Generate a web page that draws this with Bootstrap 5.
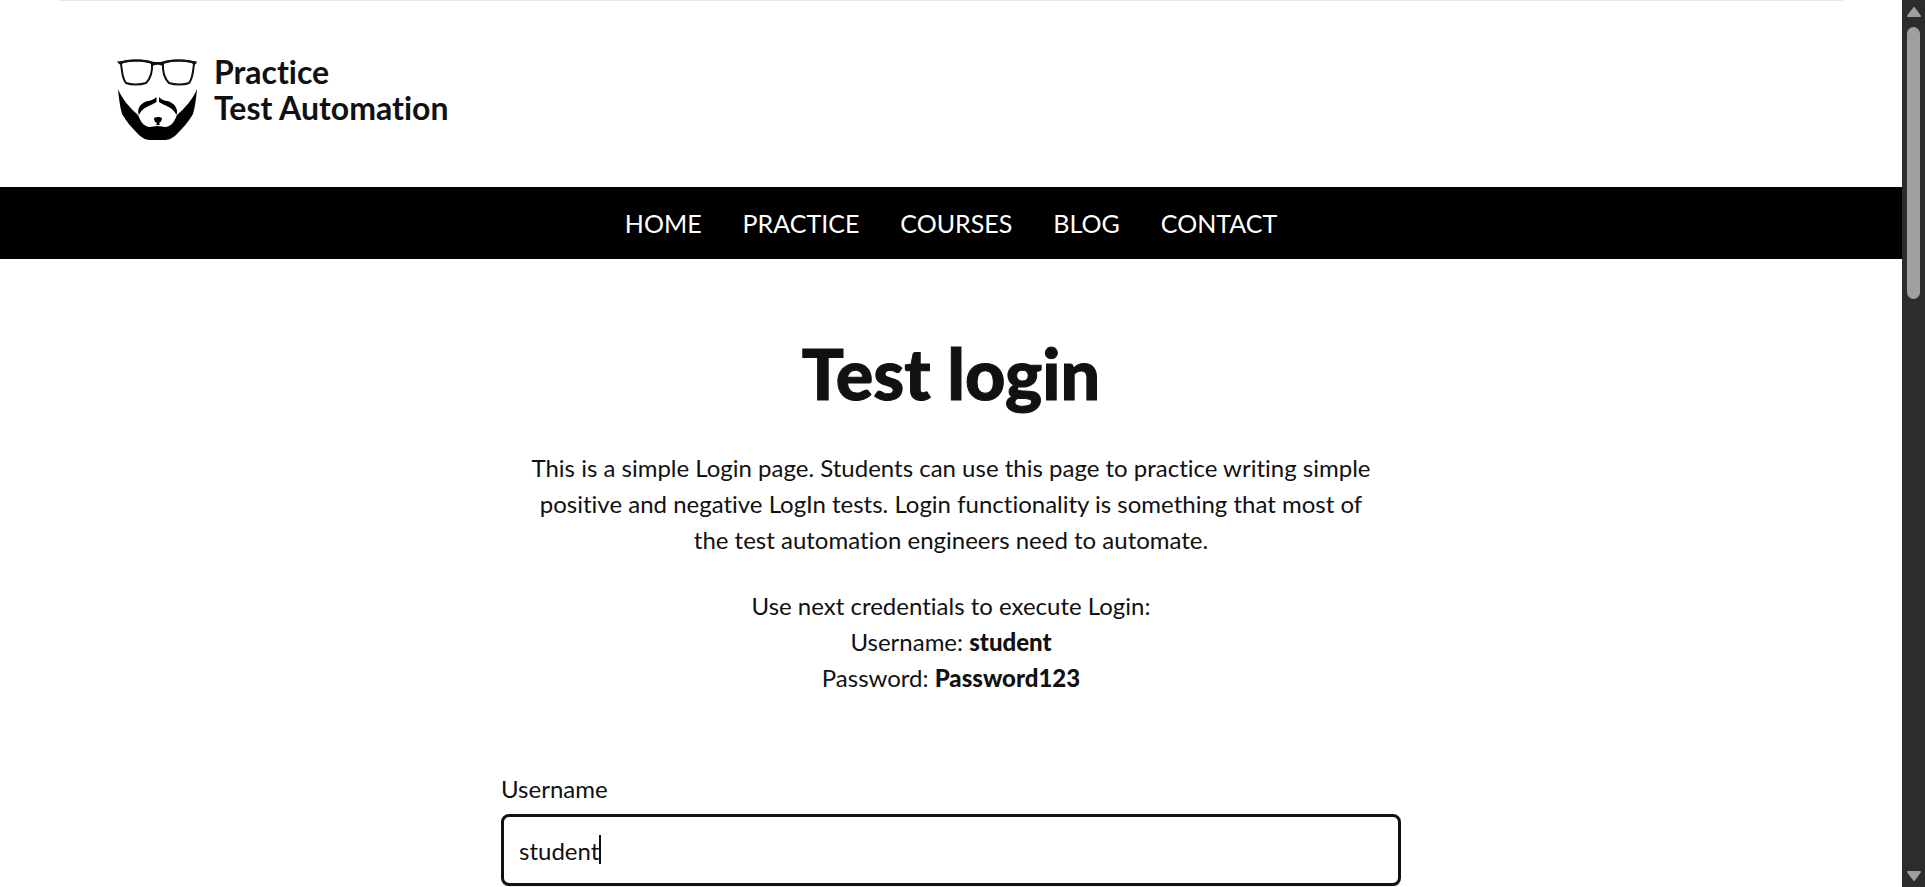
<!DOCTYPE html>
<html lang="en">
<head>
<meta charset="utf-8">
<meta name="viewport" content="width=device-width, initial-scale=1">
<title>Test Login | Practice Test Automation</title>
<link href="https://cdn.jsdelivr.net/npm/bootstrap@5.3.0/dist/css/bootstrap.min.css" rel="stylesheet">
<style>
  body { font-family: Lato, "Liberation Sans", sans-serif; font-size: 24px; line-height: 36px; color: #111; font-variant-ligatures: none; }
  .top-rule { height: 1px; margin: 0 59px; background: #e6e6e6; }
  .site-header { padding: 53px 117px 43px; }
  .brand { gap: 15px; color: #111; font-size: 32px; font-weight: 700; line-height: 36px; }
  .brand-mark { width: 82px; height: 90px; }
  .site-nav { gap: 41px; min-height: 72px; background: #000; }
  .site-nav a { color: #fff; font-size: 25px; }
  .narrow { max-width: 900px; }
  .narrow h1 { font-size: 70px; line-height: 84px; font-weight: 900; margin: 72px 0 35px; -webkit-text-stroke: 1px #111; }
  .intro { padding: 0 12px; }
  .intro p { margin-bottom: 30px; }
  .intro b { font-weight: 900; }
  .login-form { padding-top: 45px; }
  .login-form label { margin-bottom: 7px; }
  .login-form .form-control { height: 72px; padding: 0 15px; border: 3px solid #111; border-radius: 8px; font-size: 24px; color: #111; background: #fff; box-shadow: 0 2px 0 #eee; }
  .caret-line { left: 98px; top: 21px; width: 2px; height: 29px; background: #111; }
  .scroll-track { width: 23px; background: #2c2c2c; padding: 6px 0 2px; gap: 9px; }
  .scroll-thumb { width: 13px; height: 272px; border-radius: 7px; background: #9f9f9f; }
</style>
</head>
<body>
<div class="d-flex vh-100 overflow-hidden">
  <div class="flex-grow-1 overflow-hidden">
    <div class="top-rule"></div>
    <header class="site-header d-flex">
      <a class="brand d-flex text-decoration-none" href="#">
        <svg class="brand-mark" viewBox="0 -2 82 90" aria-hidden="true">
          <g fill="none" stroke="#111" stroke-width="2" stroke-linejoin="round">
            <path d="M3 7C12 3.500 27 3.500 35 7C35.500 14 34 22 29 27C23 29 14 29 9 27C5 23 5 14 4 8"/>
            <path d="M78 7C69 3.500 54 3.500 46 7C45.500 14 47 22 52 27C58 29 67 29 72 27C76 23 76 14 77 8"/>
          </g>
          <path d="M0 5.500L5 5C14 3 28 3 35 5.500Q40.500 6.500 46 5.500C53 3 67 3 76 5L80 5.500L79 8L76.500 9L75 7C66 5 54 5 47 7.500L45.500 10Q40.500 7.500 35.500 10L34 7.500C27 5 15 5 6 7L4.500 9L2 8Z" fill="#111"/>
          <path d="M1 33C5 43 13 52 21 59C23 64 25 68 29 70C33 72 36 70 40.500 70C45 70 48 72 52 70C56 68 58 64 60 59C68 52 76 43 80 33C79 43 78 51 76 58C72 65 66 72 60 78C55 83 51 84 47 84H34C30 84 26 83 21 78C15 72 9 65 5 58C3 51 2 43 1 33Z"/>
          <path d="M39.500 41V46C34 50 26 50 22 59C19 52 25 46 31 45C35 44.500 37 43 39.500 41ZM42 41V46C47.500 50 55 50 59.500 59C62 52 56 46 50 45C46 44.500 44 43 42 41Z"/>
          <path d="M37 62Q41 60 45 62C45 65 43 66.500 42 67L43 69H39L40 67C38.500 66.500 37 65 37 62Z"/>
        </svg>
        <span>Practice<br>Test Automation</span>
      </a>
    </header>
    <nav class="site-nav d-flex justify-content-center align-items-center" aria-label="Main">
      <a class="text-decoration-none" href="#">HOME</a>
      <a class="text-decoration-none" href="#">PRACTICE</a>
      <a class="text-decoration-none" href="#">COURSES</a>
      <a class="text-decoration-none" href="#">BLOG</a>
      <a class="text-decoration-none" href="#">CONTACT</a>
    </nav>
    <main class="narrow mx-auto">
      <h1 class="text-center">Test login</h1>
      <div class="intro text-center">
        <p>This is a simple Login page. Students can use this page to practice writing simple<br>positive and negative LogIn tests. Login functionality is something that most of<br>the test automation engineers need to automate.</p>
        <p>Use next credentials to execute Login:<br>Username: <b>student</b><br>Password: <b>Password123</b></p>
      </div>
      <form class="login-form">
        <label class="d-block" for="username">Username</label>
        <div class="position-relative">
          <input class="form-control" type="text" id="username" name="username" value="student">
          <span class="caret-line position-absolute"></span>
        </div>
      </form>
    </main>
  </div>
  <div class="scroll-track d-flex flex-column align-items-center flex-shrink-0" aria-hidden="true">
    <svg width="16" height="12" viewBox="0 0 16 12"><path d="M8 2L14 10H2Z" fill="#9f9f9f" stroke="#9f9f9f" stroke-width="2" stroke-linejoin="round"/></svg>
    <div class="scroll-thumb"></div>
    <svg class="mt-auto" width="16" height="16" viewBox="0 0 16 16"><path d="M8 11L14 3H2Z" fill="#9f9f9f" stroke="#9f9f9f" stroke-width="2" stroke-linejoin="round"/></svg>
  </div>
</div>
<script src="https://cdn.jsdelivr.net/npm/bootstrap@5.3.0/dist/js/bootstrap.bundle.min.js"></script>
</body>
</html>
